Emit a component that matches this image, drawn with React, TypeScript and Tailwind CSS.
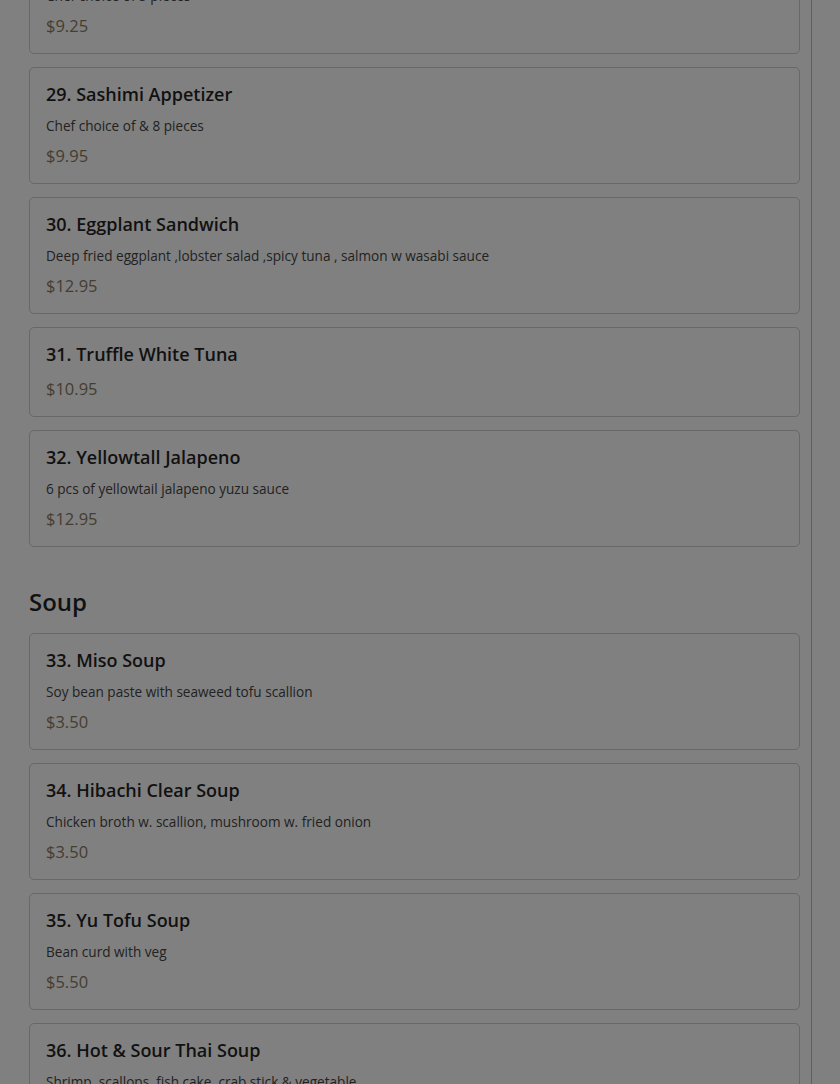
type Item = { name: string; desc?: string; price: string };

const starters: Item[] = [
  { name: '28. Sushi Appetizer', desc: 'Chef choice of 5 pieces', price: '$9.25' },
  { name: '29. Sashimi Appetizer', desc: 'Chef choice of & 8 pieces', price: '$9.95' },
  { name: '30. Eggplant Sandwich', desc: 'Deep fried eggplant ,lobster salad ,spicy tuna , salmon w wasabi sauce', price: '$12.95' },
  { name: '31. Truffle White Tuna', price: '$10.95' },
  { name: '32. Yellowtall Jalapeno', desc: '6 pcs of yellowtail jalapeno yuzu sauce', price: '$12.95' },
];

const soups: Item[] = [
  { name: '33. Miso Soup', desc: 'Soy bean paste with seaweed tofu scallion', price: '$3.50' },
  { name: '34. Hibachi Clear Soup', desc: 'Chicken broth w. scallion, mushroom w. fried onion', price: '$3.50' },
  { name: '35. Yu Tofu Soup', desc: 'Bean curd with veg', price: '$5.50' },
  { name: '36. Hot & Sour Thai Soup', desc: 'Shrimp, scallops, fish cake, crab stick & vegetable', price: '$7.95' },
];

function MenuCard({ item }: { item: Item }) {
  return (
    <div className="rounded-[5px] border border-[#686868] px-4 pt-[14px] pb-4">
      <h3 className="text-[18px] font-semibold leading-6 text-[#111]">{item.name}</h3>
      {item.desc && (
        <p className="mt-[10px] text-[13.6px] leading-5 text-[#222]">{item.desc}</p>
      )}
      <div className={`${item.desc ? 'mt-[9px]' : 'mt-3'} text-[16.5px] leading-[22px] text-[#443d30]`}>
        {item.price}
      </div>
    </div>
  );
}

export default function App() {
  return (
    <div className="min-h-[1084px] overflow-hidden bg-[#808080]" style={{ fontFamily: '"Open Sans", "Noto Sans", sans-serif' }}>
      <div className="w-[812px] min-h-[1084px] border-r border-[#5f5f5f] pl-[29px] pr-[11px]">
        <div className="-mt-[63px] flex flex-col gap-[13px]">
          {starters.map(item => <MenuCard key={item.name} item={item} />)}
        </div>

        <h2 className="mt-[39px] mb-[15px] text-[24px] font-semibold leading-8 text-[#111]">Soup</h2>
        <div className="flex flex-col gap-[13px]">
          {soups.map(item => <MenuCard key={item.name} item={item} />)}
        </div>
      </div>
    </div>
  );
}
